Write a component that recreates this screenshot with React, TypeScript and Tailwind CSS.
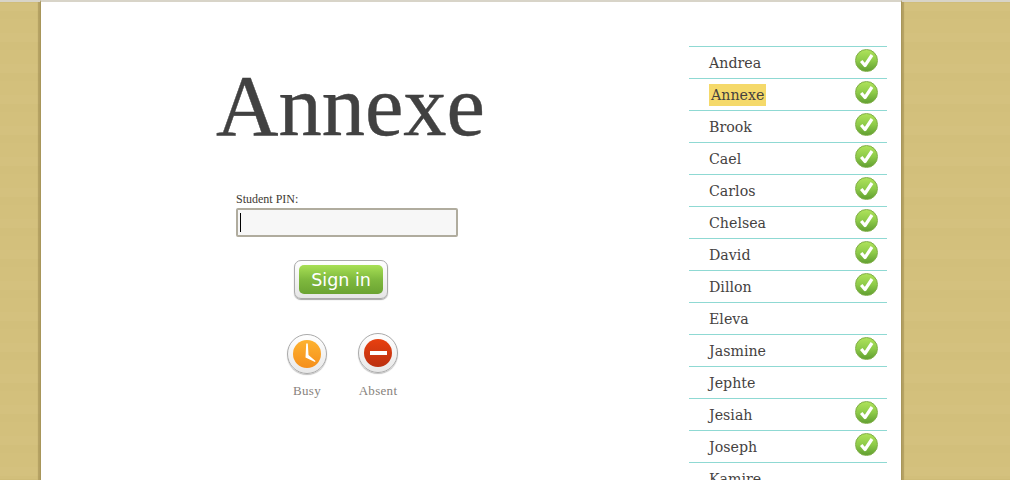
const students: { name: string; done: boolean; active?: boolean }[] = [
  { name: "Andrea", done: true },
  { name: "Annexe", done: true, active: true },
  { name: "Brook", done: true },
  { name: "Cael", done: true },
  { name: "Carlos", done: true },
  { name: "Chelsea", done: true },
  { name: "David", done: true },
  { name: "Dillon", done: true },
  { name: "Eleva", done: false },
  { name: "Jasmine", done: true },
  { name: "Jephte", done: false },
  { name: "Jesiah", done: true },
  { name: "Joseph", done: true },
  { name: "Kamire", done: false },
];

function Check() {
  return (
    <span className="mb-[5px] flex h-[23px] w-[23px] items-center justify-center rounded-full border border-[#7fae45] bg-gradient-to-b from-[#aee25a] via-[#8ecb49] to-[#62a032]">
      <svg width="17" height="17" viewBox="0 0 17 17" fill="none">
        <path d="M3.2 9 L7 13.5 L14 3" stroke="#fff" strokeWidth="3.2" strokeLinejoin="round" />
      </svg>
    </span>
  );
}

function Wood({ edge }: { edge: string }) {
  return <div className={`h-full bg-[repeating-linear-gradient(180deg,#d4c17e_0px,#d4c17e_9px,#d2bf7b_9px,#d2bf7b_17px,#d3c07c_17px,#d3c07c_31px)] ${edge}`} />;
}

function RoundButton({ label, children, inner, lift }: { label: string; children: React.ReactNode; inner: string; lift?: boolean }) {
  return (
    <div className="flex w-[40px] flex-col items-center">
      <div className={`flex h-[40px] w-[40px] items-center justify-center rounded-full border border-[#aaa] bg-gradient-to-b from-white to-[#e8e8e8] shadow-[0_1px_1px_rgba(0,0,0,0.25)] ${lift ? "-mt-px mb-px" : ""}`}>
        <div className={`flex h-[28px] w-[28px] items-center justify-center rounded-full ${inner}`}>{children}</div>
      </div>
      <span className="mt-[9px] whitespace-nowrap text-[13px] leading-[16px] tracking-[0.3px] text-[#87827c]">{label}</span>
    </div>
  );
}

export default function App() {
  return (
    <div className="flex h-screen overflow-hidden bg-white font-['Liberation_Serif',serif]">
      <div className="w-[40px] shrink-0 border-t-2 border-[#d8d4c8]">
        <Wood edge="shadow-[inset_-2px_0_1px_rgba(120,100,50,0.35)]" />
      </div>
      <main className="flex w-[862px] shrink-0 border-x border-t-2 border-x-[#a8965a] border-t-[#d8d4c8]">
        <section className="w-[648px] shrink-0">
          <h1 className="mt-[59px] ml-[175px] text-[86.5px] leading-[90px] whitespace-nowrap text-[#414141] [-webkit-text-stroke:0.4px_#414141]">Annexe</h1>
          <div className="mt-[41px] ml-[195px] w-[222px]">
            <label className="block text-[12px] leading-[14px] text-[#413a33]">Student PIN:</label>
            <div className="mt-[2px] flex h-[29px] items-center rounded-[2px] border-2 border-[#b0ac9e] bg-[#f7f7f7] pl-[2px]">
              <div className="h-[19px] w-px bg-black" />
            </div>
          </div>
          <div className="mt-[23px] ml-[253px] flex h-[39px] w-[94px] items-center justify-center rounded-[7px] border border-[#aaa] bg-gradient-to-b from-white to-[#e6e6e6] shadow-[0_1px_1px_rgba(0,0,0,0.35)]">
            <div className="flex h-[29px] w-[84px] items-center justify-center rounded-[5px] bg-gradient-to-b from-[#a8e055] via-[#7fb93e] to-[#6ba332] pt-px font-['DejaVu_Sans',sans-serif] text-[17.5px] text-white">
              Sign in
            </div>
          </div>
          <div className="mt-[35px] ml-[246px] flex gap-[31px]">
            <RoundButton label="Busy" inner="bg-gradient-to-b from-[#fdb22f] to-[#f58f1b]">
              <svg width="24" height="24" viewBox="0 0 24 24" fill="none">
                <path d="M11.2 1.5 L12.8 1.5 L13.5 13 L20.5 19 L20 20 L10.5 15.5 Z" fill="#fff" />
              </svg>
            </RoundButton>
            <RoundButton label="Absent" inner="bg-gradient-to-b from-[#e8400f] to-[#bb3010]" lift>
              <div className="h-[4px] w-[17px] bg-white" />
            </RoundButton>
          </div>
        </section>
        <ul className="mt-[44px] w-[198px] shrink-0 border-t border-[#8fd9d3]">
          {students.map((s) => (
            <li key={s.name} className="flex h-[32px] items-center justify-between border-b border-[#8fd9d3] pr-[9px] pl-[20px] font-['DejaVu_Serif',serif] text-[14.2px] text-[#45423f]">
              <span className={s.active ? "bg-[#f5d96a] px-[2px] py-[1px] leading-[20px]" : "leading-[20px]"}>{s.name}</span>
              {s.done && <Check />}
            </li>
          ))}
        </ul>
      </main>
      <div className="flex-1 border-t-2 border-[#d8d4c8]">
        <Wood edge="shadow-[inset_2px_0_1px_rgba(120,100,50,0.35)]" />
      </div>
    </div>
  );
}
